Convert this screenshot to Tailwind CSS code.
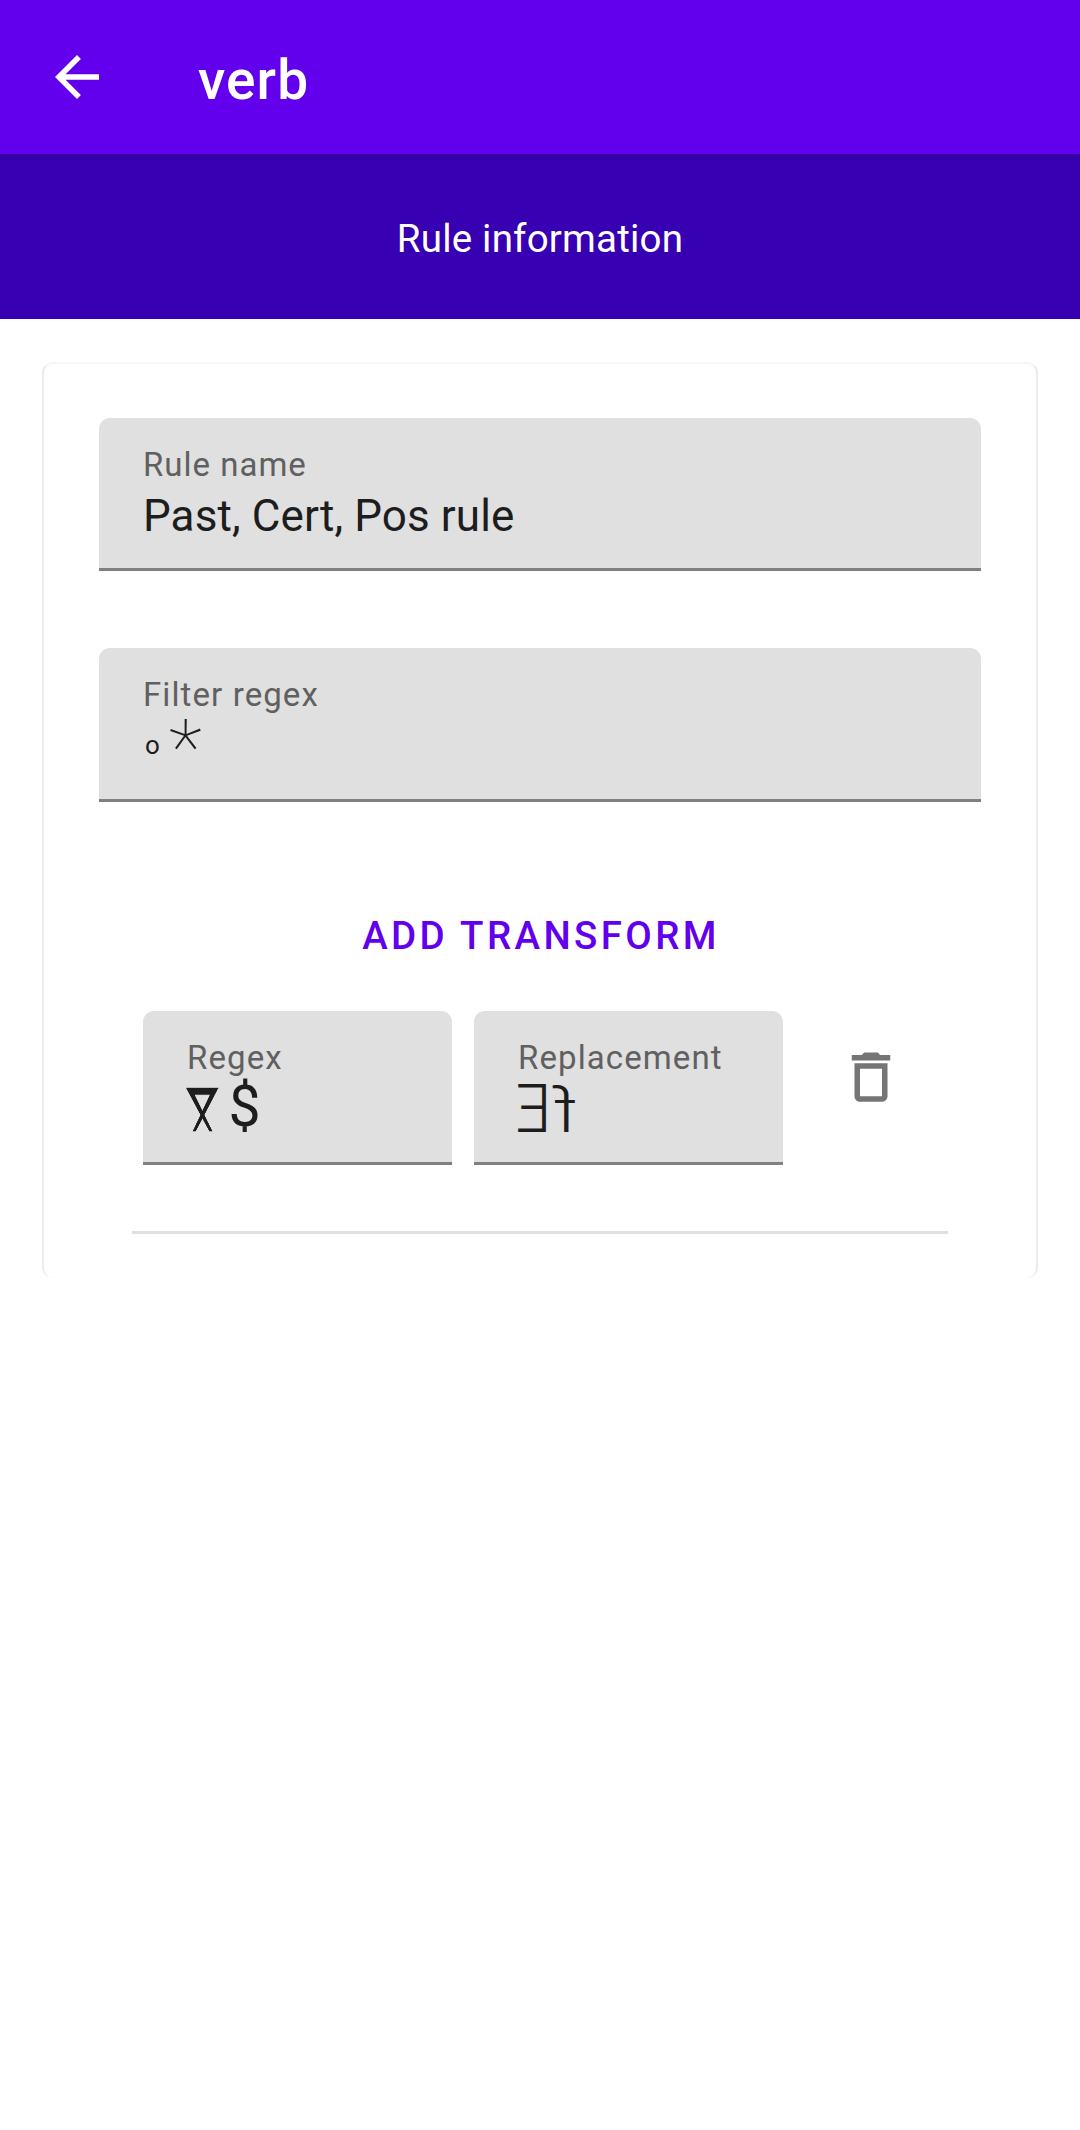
<!DOCTYPE html>
<html lang="en">
<head>
<meta charset="utf-8">
<title>verb</title>
<script src="https://cdn.jsdelivr.net/npm/@tailwindcss/browser@4"></script>
</head>
<body class="min-h-screen bg-white font-['Roboto',sans-serif] text-[#1d1d1d]">
<header class="flex h-[154px] items-center bg-[#6200ee] pl-11 text-white">
  <svg class="h-[66px] w-[66px] shrink-0" viewBox="0 0 24 24" fill="currentColor"><path d="M20 11H7.83l5.59-5.59L12 4l-8 8 8 8 1.41-1.41L7.83 13H20v-2z"/></svg>
  <h1 class="ml-[88px] pt-[6px] text-[55px] leading-none font-medium tracking-[1.1px]">verb</h1>
</header>
<div class="flex h-[165px] items-center justify-center bg-[#3700b3] bg-linear-to-b from-[#3300a4] to-[#3700b3] to-[8px] pt-[5px] text-[38.5px] text-white"><span class="tracking-[0.2px]">Rule information</span></div>
<main class="px-[42px] pt-[43px]">
  <section class="flex h-[916px] flex-col rounded-[11px] border-x-2 border-t-2 border-x-[#ececec] border-t-[#f7f7f7] px-[55px] pt-[54px]">
    <div class="h-[153px] rounded-t-[11px] border-b-3 border-[#808080] bg-[#e0e0e0] px-11 pt-[27px]">
      <div class="text-[33px] leading-[39px] tracking-[1px] text-[#606060]">Rule name</div>
      <div class="mt-[6px] text-[44px] leading-[52px] tracking-[0.1px]">Past, Cert, Pos rule</div>
    </div>
    <div class="mt-[77px] h-[154px] rounded-t-[11px] border-b-3 border-[#808080] bg-[#e0e0e0] px-11 pt-[27px]">
      <div class="text-[33px] leading-[39px] tracking-[1.1px] text-[#606060]">Filter regex</div>
      <div class="flex h-[52px] font-thin">
        <span class="ml-[2px] w-[24px] pt-[18px] text-[26px] leading-none font-normal">o</span>
        <span class="text-[78px] leading-[70px]">*</span>
      </div>
    </div>
    <div class="mt-[98px] flex h-[72px] items-center justify-center text-[38.5px] font-medium tracking-[3.35px] text-[#6200ee]"><span class="pl-[2px]">ADD TRANSFORM</span></div>
    <div class="mx-[44px] mt-[39px] flex">
      <div class="h-[154px] w-[309px] rounded-t-[11px] border-b-3 border-[#808080] bg-[#e0e0e0] px-11 pt-[27px]">
        <div class="text-[33px] leading-[39px] tracking-[1.1px] text-[#606060]">Regex</div>
        <div class="flex h-[64px] items-center">
          <span class="flex h-12 w-[32px] [transform:translateY(6px)_scale(0.74,1.2)_perspective(60px)_rotateX(-40deg)] items-center justify-center"><span class="[transform:rotate(90deg)_scale(1.05,0.9)] font-['DejaVu_Sans'] text-[54px] leading-[30px]">⋉</span></span>
          <span class="ml-[11px] h-[44px] scale-x-110 scale-y-112 text-[52px] leading-[40px]">$</span>
        </div>
      </div>
      <div class="ml-[22px] h-[154px] w-[309px] rounded-t-[11px] border-b-3 border-[#808080] bg-[#e0e0e0] px-11 pt-[27px]">
        <div class="text-[33px] leading-[39px] tracking-[1.1px] text-[#606060]">Replacement</div>
        <div class="-ml-[3px] flex h-[66px] items-center text-[66px] leading-[48px]">
          <span class="inline-block -scale-x-95 font-light">E</span><span class="ml-px inline-block origin-[50%_85%] -scale-x-110 scale-y-92 font-light">f</span>
        </div>
      </div>
      <svg class="mt-[33px] ml-[55px] h-[66px] w-[66px] shrink-0" viewBox="0 0 24 24" fill="#757575"><path fill-rule="evenodd" d="M5 4h3.7l.8-.9h5l.8.9H19v2H5zM6 7h12v12c0 1.1-.9 2-2 2H8c-1.1 0-2-.9-2-2zM8 9v10h8V9z"/></svg>
    </div>
    <div class="mt-[66px] mr-[33px] ml-[33px] h-[3px] bg-[#e0e0e0]"></div>
  </section>
</main>
</body>
</html>
